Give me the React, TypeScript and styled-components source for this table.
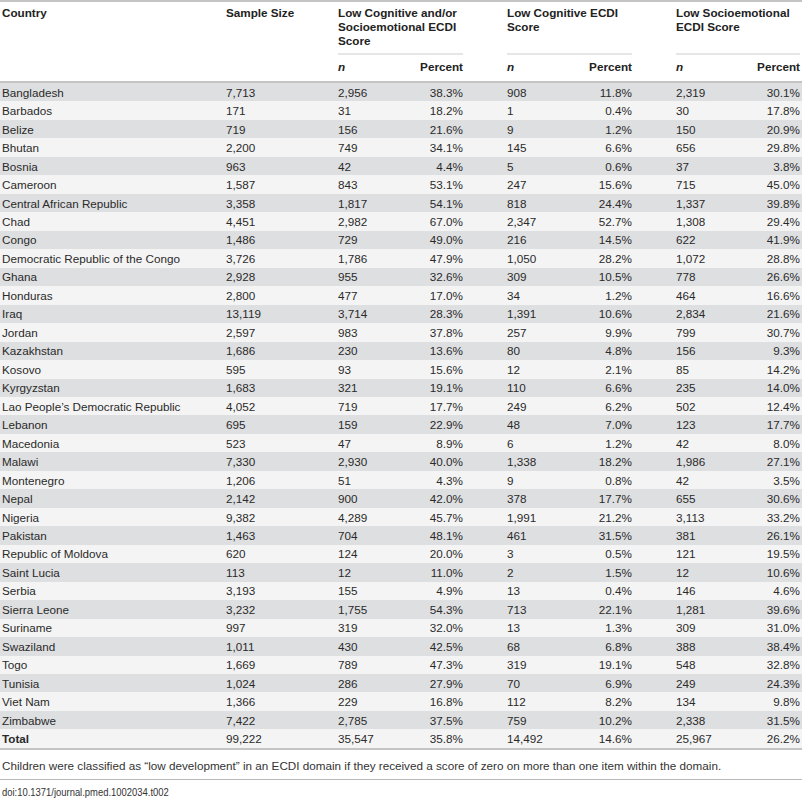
import React from 'react';
import styled, { createGlobalStyle } from 'styled-components';

const GlobalStyle = createGlobalStyle`
  html, body {
    margin: 0;
    padding: 0;
    background: #ffffff;
  }
  body {
    font-family: 'Liberation Sans', Arial, Helvetica, sans-serif;
    color: #222;
  }
`;

const COLS = '224px 112px 64px 65px 40px 64px 65px 40px 64px 64px';

type Row = [string, string, string, string, string, string, string, string];

const rows: Row[] = [
  ['Bangladesh', '7,713', '2,956', '38.3%', '908', '11.8%', '2,319', '30.1%'],
  ['Barbados', '171', '31', '18.2%', '1', '0.4%', '30', '17.8%'],
  ['Belize', '719', '156', '21.6%', '9', '1.2%', '150', '20.9%'],
  ['Bhutan', '2,200', '749', '34.1%', '145', '6.6%', '656', '29.8%'],
  ['Bosnia', '963', '42', '4.4%', '5', '0.6%', '37', '3.8%'],
  ['Cameroon', '1,587', '843', '53.1%', '247', '15.6%', '715', '45.0%'],
  ['Central African Republic', '3,358', '1,817', '54.1%', '818', '24.4%', '1,337', '39.8%'],
  ['Chad', '4,451', '2,982', '67.0%', '2,347', '52.7%', '1,308', '29.4%'],
  ['Congo', '1,486', '729', '49.0%', '216', '14.5%', '622', '41.9%'],
  ['Democratic Republic of the Congo', '3,726', '1,786', '47.9%', '1,050', '28.2%', '1,072', '28.8%'],
  ['Ghana', '2,928', '955', '32.6%', '309', '10.5%', '778', '26.6%'],
  ['Honduras', '2,800', '477', '17.0%', '34', '1.2%', '464', '16.6%'],
  ['Iraq', '13,119', '3,714', '28.3%', '1,391', '10.6%', '2,834', '21.6%'],
  ['Jordan', '2,597', '983', '37.8%', '257', '9.9%', '799', '30.7%'],
  ['Kazakhstan', '1,686', '230', '13.6%', '80', '4.8%', '156', '9.3%'],
  ['Kosovo', '595', '93', '15.6%', '12', '2.1%', '85', '14.2%'],
  ['Kyrgyzstan', '1,683', '321', '19.1%', '110', '6.6%', '235', '14.0%'],
  ['Lao People\u2019s Democratic Republic', '4,052', '719', '17.7%', '249', '6.2%', '502', '12.4%'],
  ['Lebanon', '695', '159', '22.9%', '48', '7.0%', '123', '17.7%'],
  ['Macedonia', '523', '47', '8.9%', '6', '1.2%', '42', '8.0%'],
  ['Malawi', '7,330', '2,930', '40.0%', '1,338', '18.2%', '1,986', '27.1%'],
  ['Montenegro', '1,206', '51', '4.3%', '9', '0.8%', '42', '3.5%'],
  ['Nepal', '2,142', '900', '42.0%', '378', '17.7%', '655', '30.6%'],
  ['Nigeria', '9,382', '4,289', '45.7%', '1,991', '21.2%', '3,113', '33.2%'],
  ['Pakistan', '1,463', '704', '48.1%', '461', '31.5%', '381', '26.1%'],
  ['Republic of Moldova', '620', '124', '20.0%', '3', '0.5%', '121', '19.5%'],
  ['Saint Lucia', '113', '12', '11.0%', '2', '1.5%', '12', '10.6%'],
  ['Serbia', '3,193', '155', '4.9%', '13', '0.4%', '146', '4.6%'],
  ['Sierra Leone', '3,232', '1,755', '54.3%', '713', '22.1%', '1,281', '39.6%'],
  ['Suriname', '997', '319', '32.0%', '13', '1.3%', '309', '31.0%'],
  ['Swaziland', '1,011', '430', '42.5%', '68', '6.8%', '388', '38.4%'],
  ['Togo', '1,669', '789', '47.3%', '319', '19.1%', '548', '32.8%'],
  ['Tunisia', '1,024', '286', '27.9%', '70', '6.9%', '249', '24.3%'],
  ['Viet Nam', '1,366', '229', '16.8%', '112', '8.2%', '134', '9.8%'],
  ['Zimbabwe', '7,422', '2,785', '37.5%', '759', '10.2%', '2,338', '31.5%'],
];

const total: Row = ['Total', '99,222', '35,547', '35.8%', '14,492', '14.6%', '25,967', '26.2%'];

const Page = styled.div`
  width: 802px;
`;

const Table = styled.div`
  border-top: 2px solid #c4c4c4;
  border-bottom: 2px solid #c4c4c4;
  font-size: 11.7px;
`;

const Head = styled.div`
  display: grid;
  grid-template-columns: ${COLS};
  grid-template-rows: auto auto;
  border-bottom: 2px solid #c4c4c4;
  font-weight: bold;
  line-height: 14px;
  color: #222;
`;

const HeadCell = styled.div<{ $col: string; $row: string }>`
  grid-column: ${(p) => p.$col};
  grid-row: ${(p) => p.$row};
  padding: 4px 2px 0 2px;
`;

const GroupHead = styled.div<{ $col: string }>`
  grid-column: ${(p) => p.$col};
  grid-row: 1;
  margin: 0 2px;
  padding: 4px 0 5px 0;
  border-bottom: 2px solid #e6e6e6;
  white-space: nowrap;
`;

const SubHead = styled.div<{ $right?: boolean; $italic?: boolean; $col: number }>`
  grid-column: ${(p) => p.$col};
  grid-row: 2;
  padding: 5px 2px 7px 2px;
  text-align: ${(p) => (p.$right ? 'right' : 'left')};
  font-style: ${(p) => (p.$italic ? 'italic' : 'normal')};
`;

const BodyRow = styled.div<{ $odd: boolean; $bold?: boolean }>`
  display: grid;
  grid-template-columns: ${COLS};
  height: 18.47px;
  align-items: center;
  background: ${(p) => (p.$odd ? '#dedfe1' : '#f4f4f4')};
  font-weight: ${(p) => (p.$bold ? 'bold' : 'normal')};
  color: #2a2a2a;
`;

const Cell = styled.div<{ $col: number; $right?: boolean }>`
  grid-column: ${(p) => p.$col};
  padding: 0 2px;
  white-space: nowrap;
  text-align: ${(p) => (p.$right ? 'right' : 'left')};
`;

const Value = styled.span`
  font-weight: normal;
`;

const Footnote = styled.p`
  margin: 0;
  padding: 9px 2px 6px 2px;
  font-size: 11.7px;
  line-height: 14px;
  color: #333;
  border-bottom: 1px solid #b8b8b8;
`;

const Doi = styled.p`
  margin: 0;
  padding: 5px 2px;
  font-size: 11.5px;
  line-height: 14px;
  color: #333;
`;

const Narrow = styled.span`
  display: inline-block;
  transform: scaleX(0.82);
  transform-origin: left center;
  white-space: nowrap;
`;

// column index of each value in a data row
const colIndex = [1, 2, 3, 4, 6, 7, 9, 10];
const rightAligned = [false, false, false, true, false, true, false, true];

const DataRow = ({ row, odd, bold }: { row: Row; odd: boolean; bold?: boolean }) => (
  <BodyRow $odd={odd} $bold={bold}>
    {row.map((v, i) => (
      <Cell key={i} $col={colIndex[i]} $right={rightAligned[i]}>
        {bold && i > 0 ? <Value>{v}</Value> : v}
      </Cell>
    ))}
  </BodyRow>
);

export default function App() {
  return (
    <Page>
      <GlobalStyle />
      <Table>
        <Head>
          <HeadCell $col="1" $row="1 / 3">Country</HeadCell>
          <HeadCell $col="2" $row="1 / 3">Sample Size</HeadCell>
          <GroupHead $col="3 / 5">
            Low Cognitive and/or
            <br />
            Socioemotional ECDI
            <br />
            Score
          </GroupHead>
          <GroupHead $col="6 / 8">
            Low Cognitive ECDI
            <br />
            Score
          </GroupHead>
          <GroupHead $col="9 / 11">
            Low Socioemotional
            <br />
            ECDI Score
          </GroupHead>
          <SubHead $col={3} $italic>n</SubHead>
          <SubHead $col={4} $right>Percent</SubHead>
          <SubHead $col={6} $italic>n</SubHead>
          <SubHead $col={7} $right>Percent</SubHead>
          <SubHead $col={9} $italic>n</SubHead>
          <SubHead $col={10} $right>Percent</SubHead>
        </Head>
        {rows.map((r, i) => (
          <DataRow key={r[0]} row={r} odd={i % 2 === 0} />
        ))}
        <DataRow row={total} odd={false} bold />
      </Table>
      <Footnote>
        Children were classified as “low development” in an ECDI domain if they received a score of zero on more
        than one item within the domain.
      </Footnote>
      <Doi>
        <Narrow>doi:10.1371/journal.pmed.1002034.t002</Narrow>
      </Doi>
    </Page>
  );
}
